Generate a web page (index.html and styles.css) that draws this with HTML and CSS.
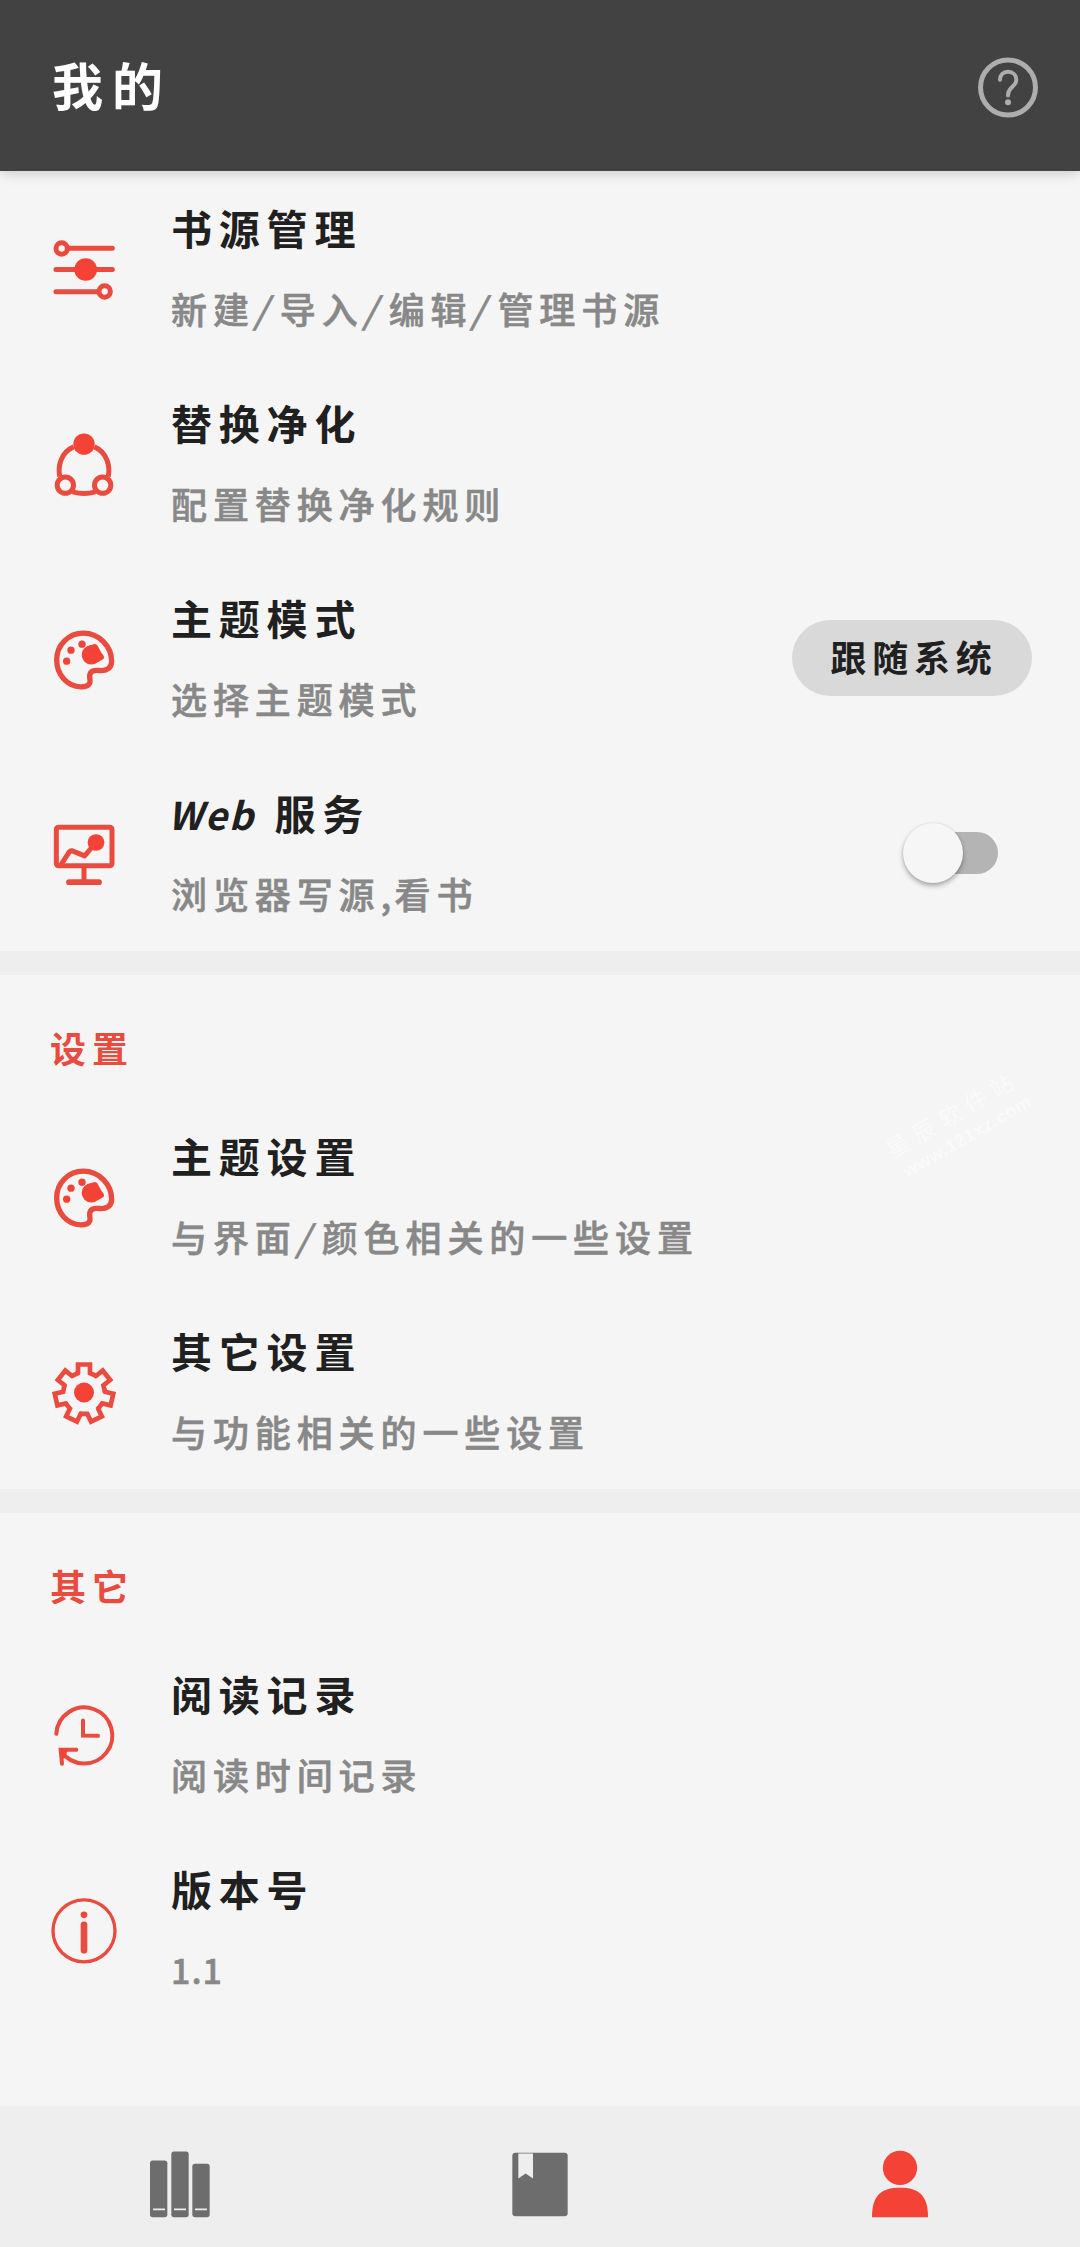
FILE: index.html
```html
<!DOCTYPE html>
<html lang="zh-CN">
<head>
<meta charset="utf-8">
<title>我的</title>
<link rel="stylesheet" href="styles.css">
</head>
<body>
<svg class="defs" width="0" height="0" aria-hidden="true">
  <symbol id="palette" viewBox="153 736.5 198 198">
    <path class="line" stroke-width="16" d="M243 919C201 919 170 882 170 838C170 793 206 758 250 758C299 758 335 800 335 842C335 862 320 872 298 870C279 868 269 873 269 888C269 897 272 901 269 908C265 917 255 919 243 919Z"/>
    <circle class="solid" cx="200" cy="842" r="11"/><circle class="solid" cx="213" cy="809" r="11"/><circle class="solid" cx="246" cy="791" r="11"/>
    <circle class="solid" cx="274" cy="823" r="29"/>
    <path class="solid" d="M262 797L281 791Q289 789 293 796L303 815L310 824Q315 832 308 837L292 846Z"/>
  </symbol>
  <symbol id="tooth" overflow="visible"><path class="line" stroke-width="14" stroke-linecap="round" stroke-miterlimit="8" d="M-18-60V-86H18V-60L35-52.300"/></symbol>
</svg>
<div class="app">
  <header class="topbar">
    <h1>我的</h1>
    <svg class="icon help" viewBox="105 97.5 198 198"><circle cx="204" cy="201" r="82.500" stroke-width="15"/><path stroke-width="12" stroke-linecap="round" d="M180 178C180 163 190 154 204 154C219 154 229 164 229 178C229 190 220 196 213 203C205 211 204 216 204 225"/><circle class="dot" cx="204" cy="245" r="9"/></svg>
  </header>

  <main>
    <section>
      <div class="row">
        <svg class="icon" viewBox="153 706.5 198 198"><g class="line" stroke-width="15" stroke-linecap="round"><path d="M205 743H337M168 807H337M168 874H295"/><circle cx="185" cy="744" r="17"/><circle cx="314" cy="873" r="17"/></g><circle class="solid" cx="257" cy="807" r="34"/></svg>
        <div class="text"><h2>书源管理</h2><p>新建<i>/</i>导入<i>/</i>编辑<i>/</i>管理书源</p></div>
      </div>
      <div class="row">
        <svg class="icon" viewBox="153 151.5 198 198"><g class="line" stroke-width="15"><path d="M179 288C174 260 180 216 221 199M283 199C324 216 330 260 325 288M218 334Q252 344 286 334"/><circle cx="196" cy="314" r="24.500"/><circle cx="308" cy="314" r="24.500"/></g><circle class="solid" cx="252" cy="191" r="32"/></svg>
        <div class="text"><h2>替换净化</h2><p>配置替换净化规则</p></div>
      </div>
      <div class="row">
        <svg class="icon"><use href="#palette"/></svg>
        <div class="text"><h2>主题模式</h2><p>选择主题模式</p></div>
        <button class="mode">跟随系统</button>
      </div>
      <div class="row">
        <svg class="icon" viewBox="153 241.5 198 198"><g class="line" stroke-width="15" stroke-linecap="round"><rect x="169" y="260" width="167" height="116" rx="7"/><path stroke-linejoin="round" stroke-linecap="butt" d="M182 374L208 334Q211 330 217 331L254 346L280 315M252 378V424"/><path stroke-width="17" d="M207 425H297"/></g><circle class="solid" cx="288" cy="306" r="25"/></svg>
        <div class="text"><h2><em>Web</em> 服务</h2><p>浏览器写源<b>,</b>看书</p></div>
        <span class="switch"><span class="thumb"></span></span>
      </div>
    </section>

    <section>
      <h3>设置</h3>
      <div class="row">
        <svg class="icon"><use href="#palette"/></svg>
        <div class="text"><h2>主题设置</h2><p>与界面<i>/</i>颜色相关的一些设置</p></div>
      </div>
      <div class="row">
        <svg class="icon" viewBox="153 715.5 198 198"><g transform="translate(252 818)"><use href="#tooth"/><use href="#tooth" transform="rotate(51.43)"/><use href="#tooth" transform="rotate(102.86)"/><use href="#tooth" transform="rotate(154.29)"/><use href="#tooth" transform="rotate(205.71)"/><use href="#tooth" transform="rotate(257.14)"/><use href="#tooth" transform="rotate(308.57)"/></g><circle class="solid" cx="252" cy="816" r="30"/></svg>
        <div class="text"><h2>其它设置</h2><p>与功能相关的一些设置</p></div>
      </div>
    </section>

    <section>
      <h3>其它</h3>
      <div class="row">
        <svg class="icon" viewBox="153 724.5 198 198"><g class="line" stroke-width="12" stroke-linecap="round"><path d="M169 820A84 84 0 1 1 184 873"/><path d="M229 868H182L186 910M249 780V825L294 826"/></g><path class="solid" d="M178 864H204L198 885L186 900Z"/></svg>
        <div class="text"><h2>阅读记录</h2><p>阅读时间记录</p></div>
      </div>
      <div class="row">
        <svg class="icon" viewBox="153 229.5 198 198"><circle class="line" stroke-width="10" cx="252" cy="331" r="93"/><circle class="solid" cx="252" cy="283" r="10"/><path class="line" stroke-width="20" stroke-linecap="round" d="M252 313V389"/></svg>
        <div class="text"><h2>版本号</h2><p class="version">1.1</p></div>
      </div>
    </section>
    <div class="watermark"><span>星辰软件站</span><span class="url">www.121xz.com</span></div>
  </main>

  <nav>
    <svg class="icon" viewBox="141 160.5 198 198"><rect x="150" y="210" width="52" height="170" rx="8"/><rect x="214" y="183" width="52" height="197" rx="8"/><rect x="277" y="220" width="52" height="160" rx="8"/><path stroke="#eee" stroke-width="5" d="M159 356.500H195M222 356.500H258M285 356.500H321"/></svg>
    <svg class="icon" viewBox="1221 160.5 198 198"><rect x="1237" y="187" width="166" height="190" rx="9"/><path fill="#eee" d="M1255 189H1299V264L1277 249L1255 264Z"/></svg>
    <svg class="icon active" viewBox="141 160.5 198 198"><circle cx="240" cy="232" r="51.500"/><path d="M156 380C156 315 183 292 240 292C297 292 324 315 324 380Z"/></svg>
  </nav>
</div>
</body>
</html>
```
FILE: styles.css
```css
* { box-sizing: border-box; margin: 0; padding: 0; }
body {
  width: 1080px;
  background: #f5f5f5;
  color: #202020;
  font-family: "Noto Sans CJK SC", "Noto Sans", sans-serif;
}
.app { display: flex; flex-direction: column; height: 2247px; }
.defs { position: absolute; }
.icon { display: block; flex: none; width: 66px; height: 66px; overflow: visible; }
.line { fill: none; stroke: #e94b3f; }
.solid { fill: #f44336; }

.topbar {
  display: flex;
  flex: none;
  align-items: center;
  justify-content: space-between;
  height: 171px;
  padding: 0 39px 0 52px;
  background: #424242;
  box-shadow: 0 2px 12px rgba(0, 0, 0, .18);
  z-index: 1;
}
h1 { margin-bottom: 3px; color: #fff; font-size: 51px; line-height: 80px; letter-spacing: 9px; }
.help { fill: none; stroke: #adadad; }
.help .dot { fill: #adadad; stroke: none; }

main { position: relative; flex: 1; }
section + section { border-top: 24px solid #eee; }
h3 {
  height: 124px;
  padding: 42px 0 0 50px;
  color: #e94b3f;
  font-size: 36px;
  line-height: 60px;
  letter-spacing: 6px;
}
.row { display: flex; align-items: center; height: 195px; padding: 0 48px 0 51px; }
.text { flex: 1; padding-left: 54px; white-space: nowrap; }
h2 { height: 80px; margin-top: -1px; font-size: 41px; line-height: 77px; letter-spacing: 6.800px; }
p {
  color: #888;
  font-size: 36px;
  font-weight: 500;
  line-height: 79px;
  letter-spacing: 5.900px;
  -webkit-text-stroke: .6px #888;
}
p i { display: inline-block; width: 25px; font-style: normal; text-align: center; transform: skewX(-14deg); }
p b { display: inline-block; width: 14px; font-weight: 500; }
em { margin-left: -3px; margin-right: 3px; font-size: 38px; letter-spacing: 2px; }
.version { font-size: 34px; letter-spacing: 1px; }

.mode {
  width: 240px;
  height: 76px;
  margin-bottom: 2px;
  border: 0;
  border-radius: 38px;
  background: #d9d9d9;
  color: #202020;
  font: 700 36px/72px "Noto Sans CJK SC", sans-serif;
  letter-spacing: 5.700px;
  text-indent: 4px;
  padding-bottom: 4px;
}
.switch {
  display: flex;
  align-items: center;
  width: 90px;
  height: 42px;
  margin-right: 34px;
  margin-bottom: 1px;
  border-radius: 21px;
  background: #b4b4b4;
}
.thumb {
  flex: none;
  width: 60px;
  height: 60px;
  margin-left: -5px;
  border-radius: 50%;
  background: #f6f6f6;
  box-shadow: 0 3px 5px rgba(0, 0, 0, .3), 0 0 2px rgba(0, 0, 0, .12);
}

.watermark {
  position: absolute;
  left: 884px;
  top: 926px;
  display: flex;
  flex-direction: column;
  width: 150px;
  color: #fafafa;
  font-size: 23px;
  line-height: 28px;
  letter-spacing: 7px;
  transform: rotate(-30deg);
  white-space: nowrap;
}
.url { padding-left: 4px; font: 700 18px/28px "Liberation Sans", sans-serif; letter-spacing: .6px; }

nav {
  display: grid;
  flex: none;
  grid-template-columns: repeat(3, 1fr);
  place-items: center;
  height: 141px;
  background: #eee;
  fill: #6d6d6d;
}
.active { fill: #f44336; }
```
